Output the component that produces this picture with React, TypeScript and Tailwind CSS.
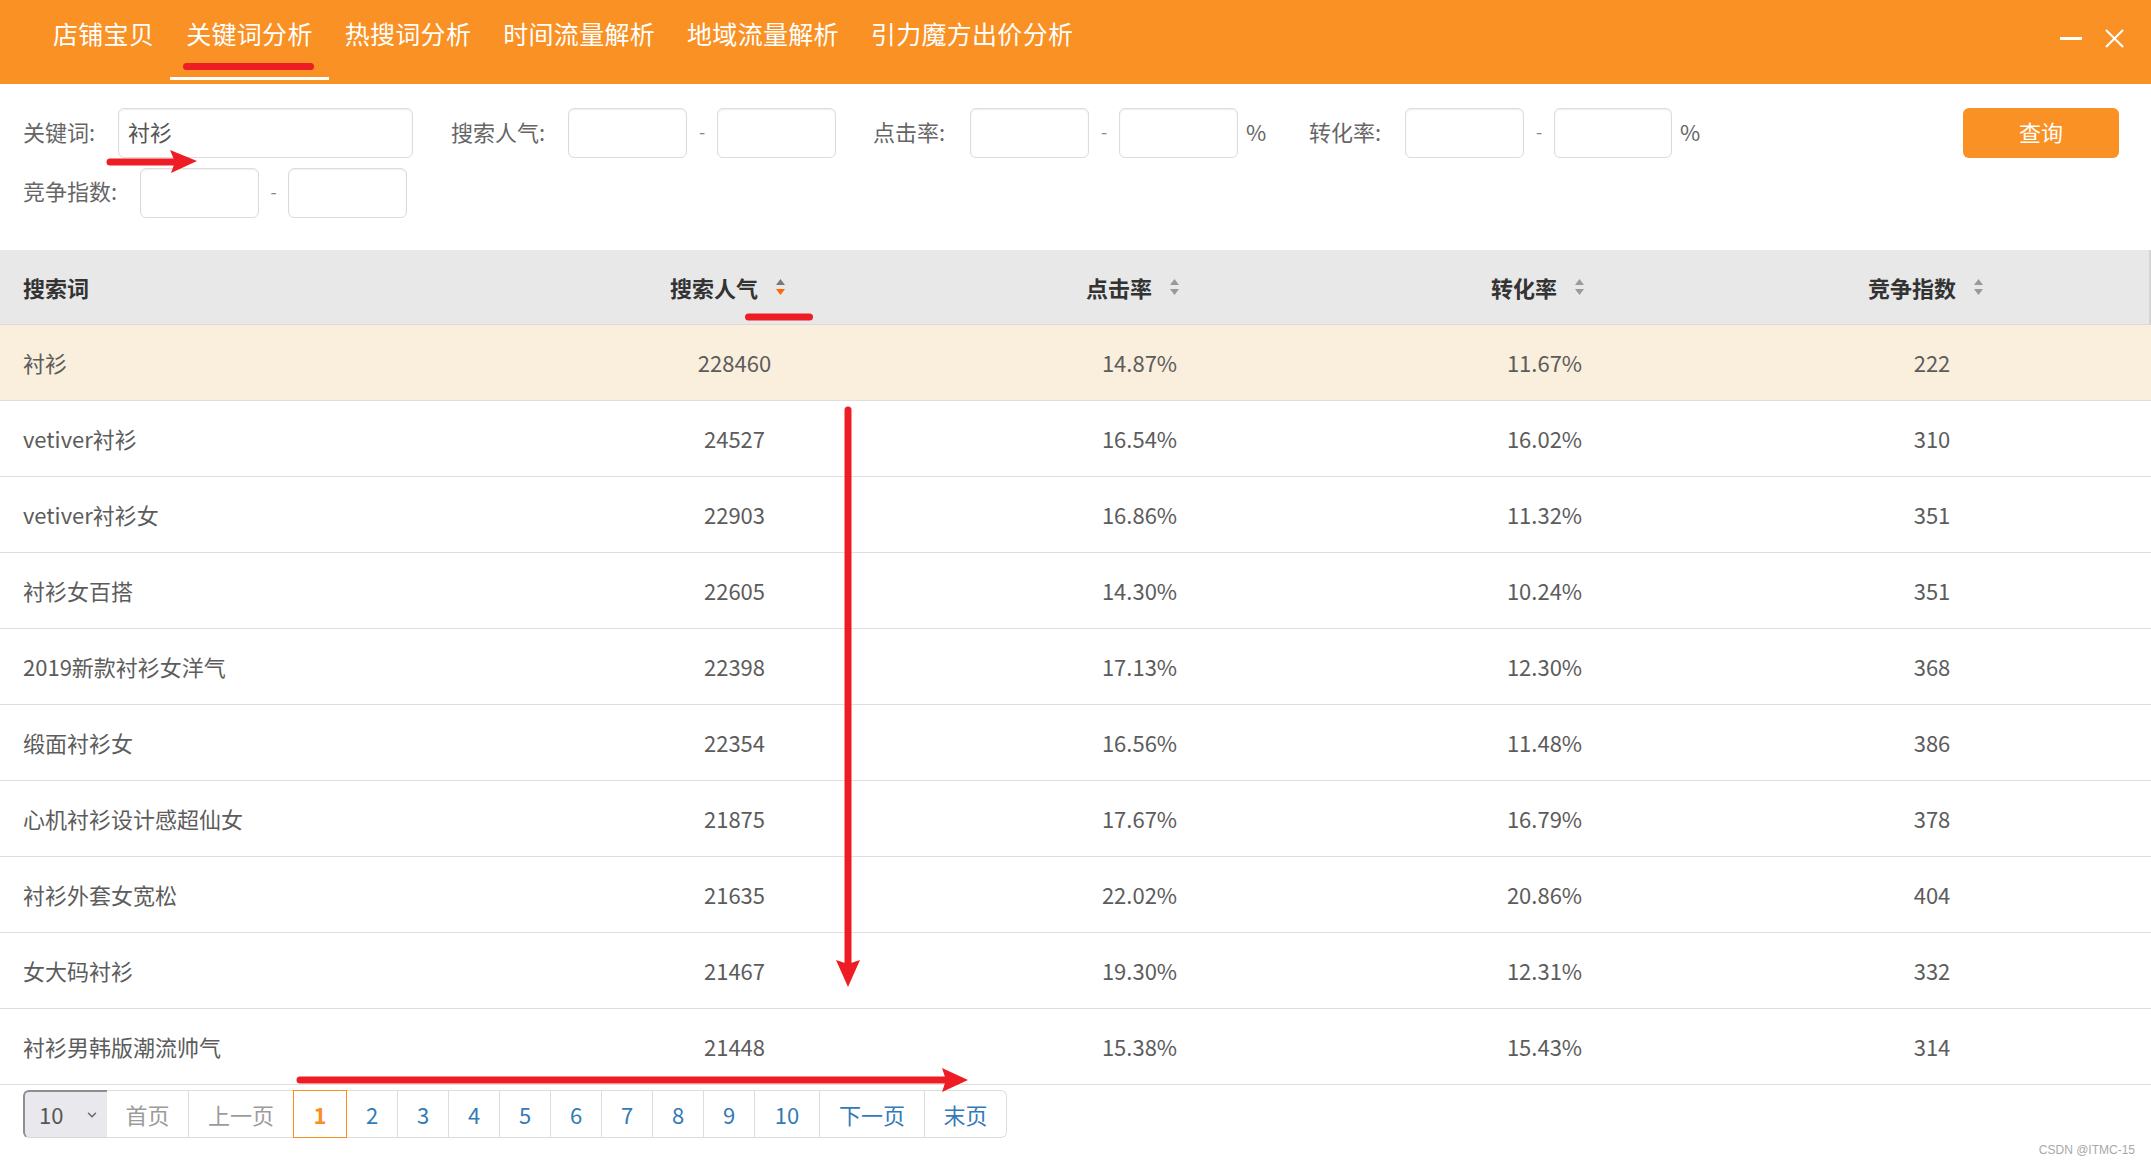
import React from "react";
import { ChevronDown } from "lucide-react";

const tabs = ["店铺宝贝", "关键词分析", "热搜词分析", "时间流量解析", "地域流量解析", "引力魔方出价分析"];

const rows: [string, string, string, string, string][] = [
  ["衬衫", "228460", "14.87%", "11.67%", "222"],
  ["vetiver衬衫", "24527", "16.54%", "16.02%", "310"],
  ["vetiver衬衫女", "22903", "16.86%", "11.32%", "351"],
  ["衬衫女百搭", "22605", "14.30%", "10.24%", "351"],
  ["2019新款衬衫女洋气", "22398", "17.13%", "12.30%", "368"],
  ["缎面衬衫女", "22354", "16.56%", "11.48%", "386"],
  ["心机衬衫设计感超仙女", "21875", "17.67%", "16.79%", "378"],
  ["衬衫外套女宽松", "21635", "22.02%", "20.86%", "404"],
  ["女大码衬衫", "21467", "19.30%", "12.31%", "332"],
  ["衬衫男韩版潮流帅气", "21448", "15.38%", "15.43%", "314"],
];

function SortIcon({ active }: { active?: boolean }) {
  return (
    <svg width="11" height="16" viewBox="0 0 11 16" className="ml-[17px] shrink-0">
      <polygon points="5.5,0 10,6 1,6" fill={active ? "#7a7a7a" : "#9a9a9a"} />
      <polygon points="1,10 10,10 5.5,16" fill={active ? "#ff6a00" : "#9a9a9a"} />
    </svg>
  );
}

function Input({ w, value }: { w: string; value?: string }) {
  return (
    <div
      className={`${w} h-[50px] rounded-[6px] border border-[#dcdcdc] bg-white shadow-[inset_0_1px_2px_rgba(0,0,0,0.07)] flex items-center pl-[9px] pb-[3px] text-[22px] text-[#555]`}
    >
      {value}
    </div>
  );
}

function Dash({ w }: { w: string }) {
  return <div className={`${w} text-center text-[18px] text-[#888] pb-[4px]`}>-</div>;
}

export default function App() {
  const grid = "grid grid-cols-[532px_405px_405px_405px_370px] items-center";
  return (
    <div className="relative w-[2151px] h-[1167px] overflow-hidden bg-white font-['Noto_Sans_CJK_SC',sans-serif]">
      {/* Top bar */}
      <div className="h-[84px] bg-[#f99124] flex items-start pl-[37px] pr-[27px]">
        {tabs.map((t, i) => (
          <div
            key={t}
            className={`h-[80px] px-[16px] pt-[21px] text-[25px] leading-[25px] tracking-[0.3px] text-white ${
              i === 1 ? "border-b-[3px] border-white" : ""
            }`}
          >
            {t}
          </div>
        ))}
        <div className="ml-auto flex items-center h-[76px] gap-[23px]">
          <div className="w-[22px] h-[3px] bg-white" />
          <svg width="19" height="19" viewBox="0 0 19 19">
            <line x1="1" y1="1" x2="18" y2="18" stroke="white" strokeWidth="2.2" />
            <line x1="18" y1="1" x2="1" y2="18" stroke="white" strokeWidth="2.2" />
          </svg>
        </div>
      </div>

      {/* Filter form */}
      <div className="pt-[24px] pl-[23px] pr-[32px] text-[22px] text-[#666]">
        <div className="flex items-center h-[50px]">
          <span className="w-[95px] pb-[4px]">关键词:</span>
          <Input w="w-[295px]" value="衬衫" />
          <span className="ml-[38px] w-[117px] pb-[4px]">搜索人气:</span>
          <Input w="w-[119px]" />
          <Dash w="w-[30px]" />
          <Input w="w-[119px]" />
          <span className="ml-[37px] w-[97px] pb-[4px]">点击率:</span>
          <Input w="w-[119px]" />
          <Dash w="w-[30px]" />
          <Input w="w-[119px]" />
          <span className="ml-[8px] w-[63px] pb-[4px]">%</span>
          <span className="w-[96px] pb-[4px]">转化率:</span>
          <Input w="w-[119px]" />
          <Dash w="w-[30px]" />
          <Input w="w-[118px]" />
          <span className="ml-[8px] pb-[4px]">%</span>
          <button className="ml-auto w-[156px] h-[50px] pb-[3px] rounded-[6px] bg-[#f99124] text-white text-[22px]">
            查询
          </button>
        </div>
        <div className="flex items-center h-[50px] mt-[10px]">
          <span className="w-[117px] pb-[5px]">竞争指数:</span>
          <Input w="w-[119px]" />
          <Dash w="w-[29px]" />
          <Input w="w-[119px]" />
        </div>
      </div>

      {/* Table */}
      <div className="mt-[32px]">
        <div className={`${grid} h-[75px] bg-[#e8e8e8] border-b border-[#dadada] border-r-2 border-r-[#d4d4d4] text-[22px] font-bold text-[#333]`}>
          <div className="pl-[23px]">搜索词</div>
          <div className="flex items-center justify-center pr-[13px]">
            搜索人气
            <SortIcon active />
          </div>
          <div className="flex items-center justify-center pr-[13px]">
            点击率
            <SortIcon />
          </div>
          <div className="flex items-center justify-center pr-[13px]">
            转化率
            <SortIcon />
          </div>
          <div className="flex items-center justify-center pr-[12px]">
            竞争指数
            <SortIcon />
          </div>
        </div>
        {rows.map((r, i) => (
          <div
            key={i}
            className={`${grid} h-[76px] border-b border-[#dedede] text-[22px] text-[#5c5c5c] ${
              i === 0 ? "bg-[#faefdd]" : "bg-white"
            }`}
          >
            <div className="pl-[23px]">{r[0]}</div>
            <div className="text-center">{r[1]}</div>
            <div className="text-center">{r[2]}</div>
            <div className="text-center">{r[3]}</div>
            <div className="text-center">{r[4]}</div>
          </div>
        ))}
      </div>

      {/* Pagination */}
      <div className="mt-[5px] ml-[23px] flex h-[48px] text-[22px]">
        <div className="w-[84px] h-full flex items-center pl-[14px] bg-[#e9e9ed] border-t-2 border-l-2 border-[#8e8e8e] border-b border-b-[#d8d8d8] rounded-l-[6px] text-[#555]">
          <span>10</span>
          <ChevronDown size={14} strokeWidth={2.5} className="ml-[22px] text-[#666]" />
        </div>
        <div className="w-[82px] h-full flex items-center justify-center border-y border-r border-[#dddddd] text-[#9b9b9b]">首页</div>
        <div className="w-[104px] h-full flex items-center justify-center border-y border-[#dddddd] text-[#9b9b9b]">上一页</div>
        <div className="w-[54px] h-full flex items-center justify-center border border-[#f7901e] text-[#f7901e] font-bold">1</div>
        {["2", "3", "4", "5", "6", "7", "8", "9"].map((n) => (
          <div key={n} className="w-[51px] h-full flex items-center justify-center border-y border-r border-[#dddddd] text-[#337ab7]">
            {n}
          </div>
        ))}
        <div className="w-[65px] h-full flex items-center justify-center border-y border-r border-[#dddddd] text-[#337ab7]">10</div>
        <div className="w-[105px] h-full flex items-center justify-center border-y border-r border-[#dddddd] text-[#337ab7]">下一页</div>
        <div className="w-[82px] h-full flex items-center justify-center border-y border-r border-[#dddddd] rounded-r-[6px] text-[#337ab7]">末页</div>
      </div>

      {/* Watermark */}
      <div className="absolute right-[16px] bottom-[8px] text-[12px] text-[#a8a8a8] font-['Liberation_Sans',sans-serif]">
        CSDN @ITMC-15
      </div>

      {/* Red annotations */}
      <svg className="absolute inset-0 pointer-events-none" width="2151" height="1167" viewBox="0 0 2151 1167">
        <g fill="#ee1c25" stroke="#ee1c25" strokeLinecap="round">
          <line x1="186.5" y1="66.5" x2="310.5" y2="66.5" strokeWidth="7" />
          <line x1="748.5" y1="317" x2="809.5" y2="317" strokeWidth="7" />
          <line x1="110" y1="162" x2="178" y2="162" strokeWidth="7" />
          <polygon points="170,150 197,161 171,173 175,162" stroke="none" />
          <line x1="848" y1="410" x2="848" y2="966" strokeWidth="7" />
          <polygon points="836,960 848,964 860,960 848,987" stroke="none" />
          <line x1="300" y1="1080" x2="948" y2="1080" strokeWidth="7" />
          <polygon points="942,1068 968,1080 942,1092 946,1080" stroke="none" />
        </g>
      </svg>
    </div>
  );
}
